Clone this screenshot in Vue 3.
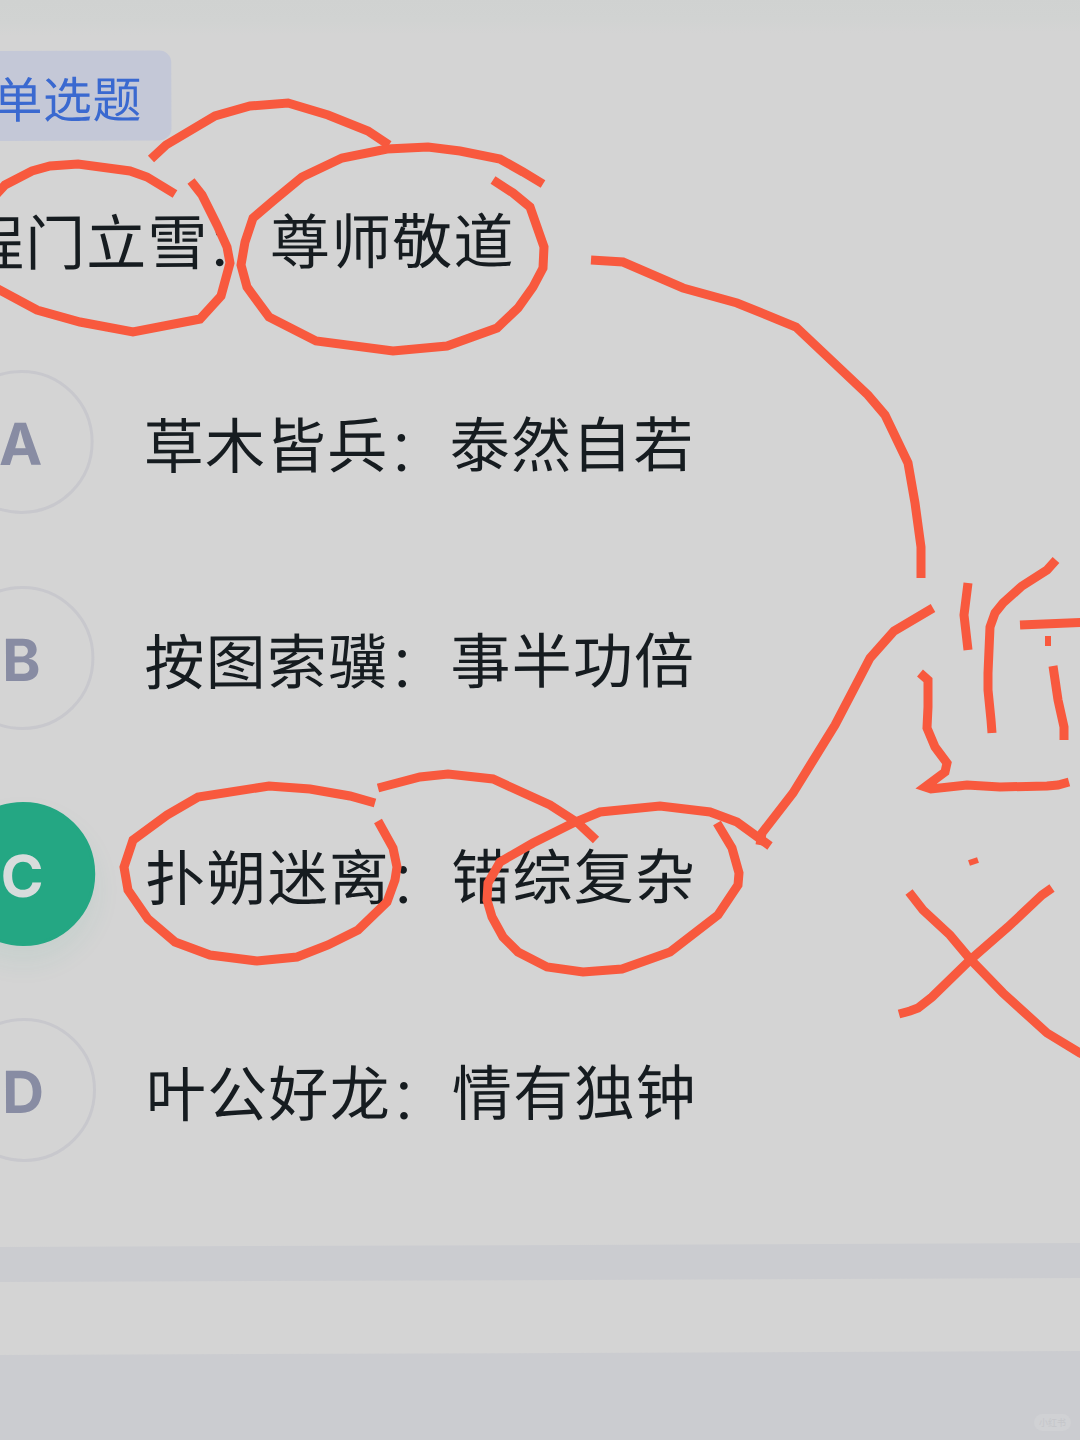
<template>
  <div class="screen">
    <div class="sheet">
      <section class="question">
        <span class="tag">单选题</span>
        <h1 class="title">程门立雪<span class="colon">：</span>尊师敬道</h1>

        <ul class="options">
          <li
            v-for="option in options"
            :key="option.key"
            class="option"
            :class="{ selected: option.key === selected }"
            @click="selected = option.key"
          >
            <span class="letter">{{ option.key }}</span>
            <span class="text">{{ option.left }}<span class="colon">：</span>{{ option.right }}</span>
          </li>
        </ul>
      </section>

      <section class="panel"></section>
    </div>

    <!-- pen marks over the question -->
    <svg class="ink" viewBox="0 0 1080 1440">
      <polyline v-for="(points, i) in strokes" :key="i" :points="points" />
      <polyline v-for="points in dots" :key="points" class="dot" :points="points" />
    </svg>

    <span class="badge">小红书</span>
  </div>
</template>

<script setup>
import { ref } from 'vue';

const selected = ref('C');

const options = [
  { key: 'A', left: '草木皆兵', right: '泰然自若' },
  { key: 'B', left: '按图索骥', right: '事半功倍' },
  { key: 'C', left: '扑朔迷离', right: '错综复杂' },
  { key: 'D', left: '叶公好龙', right: '情有独钟' },
];

const strokes = [
  // title: link and the two circles
  '151,159 166,145 215,116 250,106 288,103 328,115 368,131 389,145',
  '-6,197 5,185 32,171 50,166 78,164 130,171 147,177 175,194',
  '191,181 202,195 217,225 227,247 230,263 221,296 200,319 133,332 80,322 37,310 -4,288',
  '543,184 523,172 500,159 460,151 428,147 387,149 342,158 302,177 273,201 253,218 245,242 241,265 247,287 269,317 316,341 393,351 447,346 497,328 518,308 533,287 543,268 544,247 530,207 513,193 493,180',
  // title to note
  '591,260 623,262 683,288 737,303 796,327 868,395 885,415 908,463 915,503 921,547 921,578',
  // option C: circles and link
  '375,803 350,796 310,789 269,786 198,797 167,815 133,840 124,867 128,890 148,919 175,942 210,955 257,961 297,957 328,945 358,930 387,902 395,880 397,867 393,848 378,821',
  '378,788 420,777 448,774 493,779 550,805 578,823 596,840',
  '770,846 737,822 710,812 660,806 600,812 573,823 533,843 500,862 488,883 487,900 492,917 503,937 518,952 547,967 583,972 622,969 670,952 718,915 738,885 739,873 732,848 717,823',
  // option C to note
  '760,845 762,833 793,793 835,725 870,658 894,631 933,608',
  // note, first character
  '968,583 964,615 968,650',
  '1056,560 1047,570 1022,586 1003,603 995,613 990,627 988,673 988,690 991,720 992,733',
  '1020,625 1090,622',
  '1053,666 1058,700 1064,727 1064,740',
  '920,673 928,680 928,707 927,728 935,747 947,763 945,772 925,787 931,789 967,785 1000,787 1047,786 1058,785 1069,782',
  // note, second character
  '909,892 923,910 950,935 970,959 1003,993 1047,1033 1080,1053 1092,1059',
  '1052,888 1042,895 1008,927 970,960 932,997 918,1008 910,1011 899,1014',
];

const dots = ['1048,636 1048,646', '969,863 978,860'];
</script>

<style>
body {
  margin: 0;
  background: #d4d4d4;
}
</style>

<style scoped>
.screen {
  position: relative;
  width: 1080px;
  height: 1440px;
  overflow: hidden;
  background: #d4d4d4;
  font-family: "Noto Sans CJK SC", sans-serif;
}

/* the page lies very slightly turned */
.sheet {
  display: flex;
  flex-direction: column;
  width: 1200px;
  height: 1460px;
  margin-left: -60px;
  background: #cbccd0;
  transform: rotate(-0.21deg);
  transform-origin: 60px 0;
}

.question {
  box-sizing: border-box;
  height: 1247px;
  padding-top: 51px;
  background: linear-gradient(#d0d2d1, #d1d3d2 22px, #d4d4d4 36px);
}

.tag {
  display: block;
  box-sizing: border-box;
  width: 231px;
  height: 90px;
  padding-left: 53px;
  border-radius: 12px;
  background: #c4c8d7;
  color: #3a69d0;
  font-size: 49px;
  line-height: 92px;
  letter-spacing: 0.5px;
}

.title {
  margin: 53px 0 0 23px;
  color: #161c20;
  font-size: 60px;
  font-weight: 400;
  line-height: 90px;
  letter-spacing: 1.2px;
}

.options {
  display: flex;
  flex-direction: column;
  gap: 72px;
  margin: 86px 0 0 8px;
  padding: 0;
  list-style: none;
}

.option {
  display: flex;
  align-items: center;
  gap: 50px;
  height: 144px;
}

.letter {
  box-sizing: border-box;
  width: 144px;
  height: 144px;
  padding-right: 2px;
  border: 3px solid #c8c8cd;
  border-radius: 50%;
  color: #888ca3;
  font-family: Inter, sans-serif;
  font-size: 58px;
  font-weight: 700;
  line-height: 142px;
  text-align: center;
}

.selected .letter {
  border-color: #24a783;
  background: #24a783;
  box-shadow: 0 16px 28px rgba(36, 167, 131, 0.08);
  color: #d8dcdc;
}

.text {
  padding-top: 2px;
  color: #161c20;
  font-size: 60px;
  line-height: 90px;
  letter-spacing: 1.2px;
}

/* lighter colon, kept one full character wide */
.colon {
  display: inline-block;
  width: 61.2px;
  font-weight: 300;
  line-height: 1;
  transform: translate(-2px, 4px);
}

.title .colon {
  transform: translate(-4px, 2px);
}

.panel {
  height: 73px;
  margin-top: 35px;
  background: #d4d4d4;
}

.ink {
  position: absolute;
  inset: 0;
  width: 1080px;
  height: 1440px;
  fill: none;
  stroke: #f8593e;
  stroke-width: 9;
  pointer-events: none;
}

.ink .dot {
  stroke-width: 6;
}

.badge {
  position: absolute;
  right: 9px;
  bottom: 9px;
  width: 37px;
  height: 17px;
  border-radius: 9px;
  background: #d0d1d4;
  color: #c5c6ca;
  font-size: 9px;
  line-height: 17px;
  text-align: center;
}
</style>
